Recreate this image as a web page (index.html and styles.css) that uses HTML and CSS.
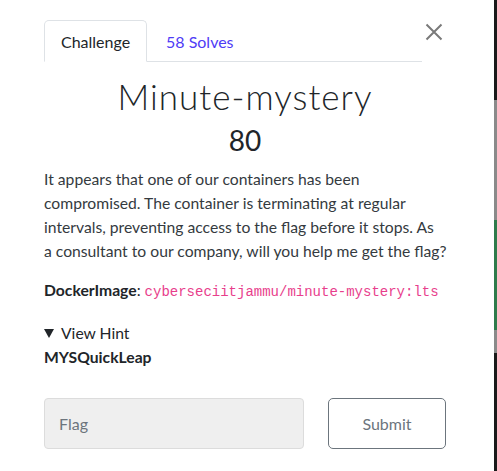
FILE: index.html
```html
<!DOCTYPE html>
<html>
<head>
<meta charset="utf-8">
<link rel="stylesheet" href="styles.css">
</head>
<body>
<div class="modal">
  <div class="header">
    <ul class="tabs">
      <li class="tab active">Challenge</li>
      <li class="tab link">58 Solves</li>
    </ul>
    <button class="close" aria-label="Close">
      <svg width="18" height="18" viewBox="0 0 18 18"><path d="M1.5 1.5 L16.5 16.5 M16.5 1.5 L1.5 16.5" stroke="#7a7a7a" stroke-width="2" fill="none"/></svg>
    </button>
  </div>
  <h2 class="title">Minute-mystery</h2>
  <h3 class="value">80</h3>
  <p class="desc">It appears that one of our containers has been compromised. The container is terminating at regular intervals, preventing access to the flag before it stops. As<br>a consultant to our company, will you help me get the flag?</p>
  <p class="docker"><strong>DockerImage</strong>: <code>cyberseciitjammu/minute-mystery:lts</code></p>
  <div class="hint">
    <div class="summary"><span class="tri"></span>View Hint</div>
    <div class="hint-body">MYSQuickLeap</div>
  </div>
  <div class="submit-row">
    <input class="flag" type="text" placeholder="Flag">
    <button class="submit">Submit</button>
  </div>
</div>
<div class="scrollbar"></div>
</body>
</html>
```
FILE: styles.css
```css
html, body {
  margin: 0;
  padding: 0;
  background: #fff;
}
body {
  font-family: Lato, "Open Sans", sans-serif;
  color: #212529;
  font-size: 15.7px;
  line-height: 24px;
  width: 497px;
  height: 471px;
  overflow: hidden;
  position: relative;
}
.modal {
  padding: 20px 0 0 44px;
  width: 402px;
}
.header {
  display: flex;
  align-items: flex-start;
}
.tabs {
  list-style: none;
  margin: 0;
  padding: 0;
  display: flex;
  width: 378px;
  border-bottom: 1px solid #dee2e6;
  height: 41px;
}
.tab {
  font-size: 16px;
  padding: 0 16px;
  height: 41px;
  line-height: 41px;
  box-sizing: border-box;
  border: 1px solid transparent;
  border-top-left-radius: 5px;
  border-top-right-radius: 5px;
}
.tab.active {
  border-color: #dee2e6;
  border-bottom-color: #fff;
  height: 42px;
  width: 103px;
  text-align: center;
  background: #fff;
  color: #212529;
}
.tab.link {
  color: #4f3cf6;
  padding-left: 18px;
}
.close {
  border: 0;
  background: transparent;
  padding: 0;
  margin: 3px 0 0 3px;
  width: 18px;
  height: 18px;
  display: block;
}
.close svg { display: block; }
.title {
  margin: 13px 0 0;
  font-size: 35px;
  font-weight: 300;
  letter-spacing: 1px;
  text-align: center;
  line-height: 42px;
}
.value {
  margin: 6px 0 0;
  font-size: 28px;
  font-weight: 400;
  text-align: center;
  line-height: 34px;
}
.desc {
  margin: 10px 0 0;
  width: 410px;
  color: #343a40;
}
.docker {
  margin: 15px 0 0;
  white-space: nowrap;
}
.docker strong { font-weight: 700; }
code {
  font-family: "Liberation Mono", monospace;
  font-size: 14px;
  color: #e83e8c;
}
.hint {
  margin-top: 17px;
}
.summary {
  display: flex;
  align-items: center;
}
.tri {
  display: inline-block;
  width: 0;
  height: 0;
  border-left: 5px solid transparent;
  border-right: 5px solid transparent;
  border-top: 9px solid #212529;
  margin-right: 7px;
  margin-top: 1px;
}
.hint-body {
  font-weight: 700;
}
.submit-row {
  display: flex;
  gap: 24px;
  margin-top: 29px;
}
.flag {
  width: 260px;
  height: 51px;
  box-sizing: border-box;
  background: #efefef;
  border: 1px solid #dcdcdc;
  border-radius: 4px;
  padding: 0 14px;
  font-family: Lato, sans-serif;
  font-size: 16px;
  color: #495057;
}
.flag::placeholder { color: #6c757d; }
.submit {
  width: 118px;
  height: 51px;
  box-sizing: border-box;
  background: #fff;
  border: 1px solid #6c757d;
  border-radius: 5px;
  font-family: Lato, sans-serif;
  font-size: 16px;
  color: #6c757d;
}
.scrollbar {
  position: absolute;
  top: 0;
  right: 0;
  width: 3px;
  height: 471px;
  background: linear-gradient(to bottom,
    #1a1a1a 0, #1a1a1a 100px,
    #8a8a8a 100px, #8a8a8a 220px,
    #2f7b4b 220px, #2f7b4b 330px,
    #8a8a8a 330px, #8a8a8a 353px,
    #1a1a1a 353px, #1a1a1a 471px);
}
```
